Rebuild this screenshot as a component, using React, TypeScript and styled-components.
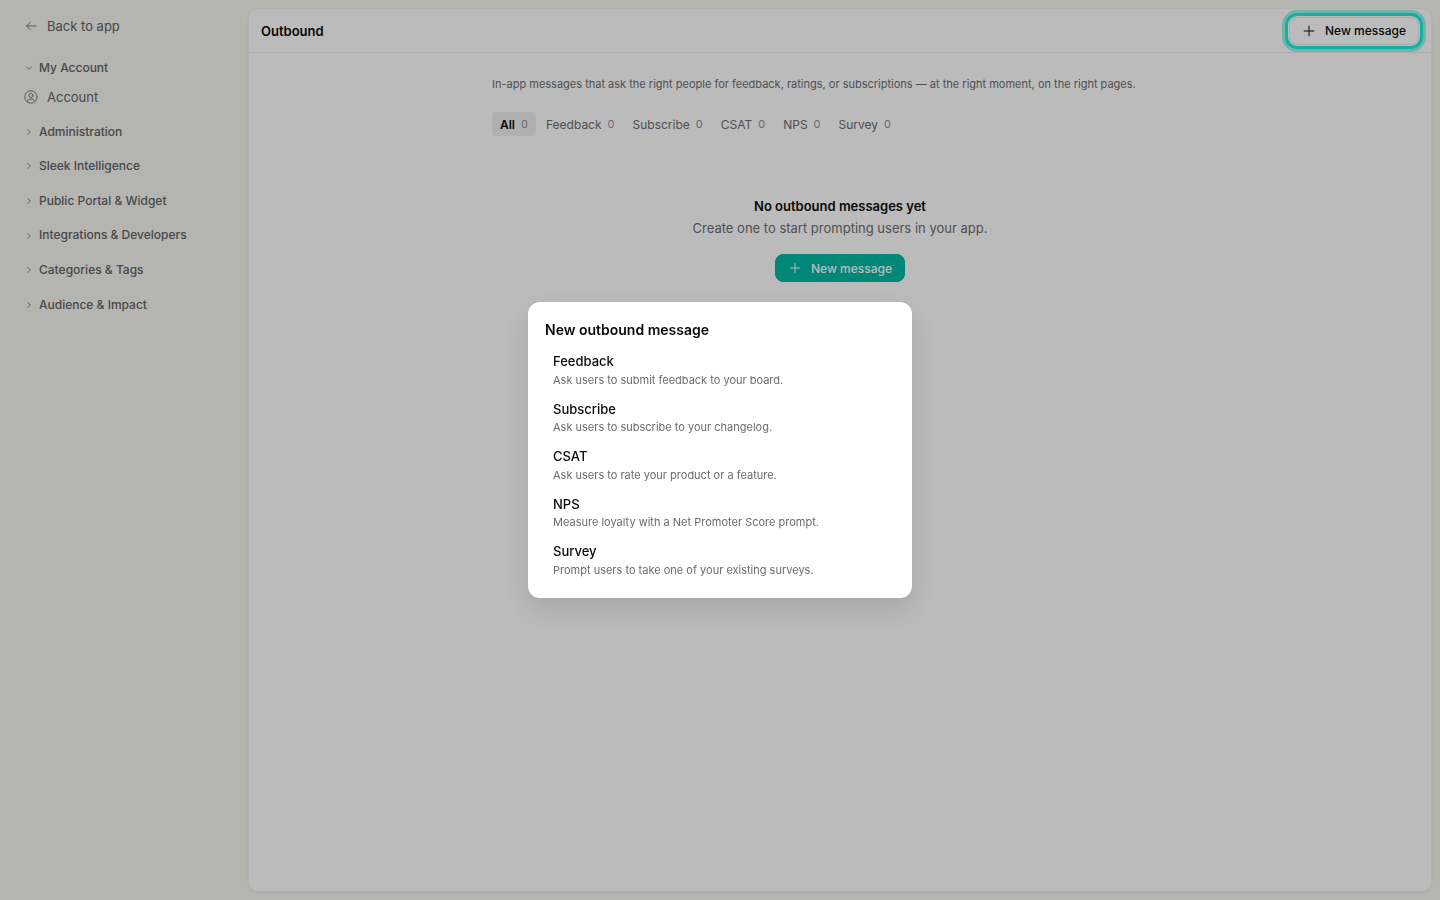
import React from "react";
import styled, { createGlobalStyle } from "styled-components";

const GlobalStyle = createGlobalStyle`
  *, *::before, *::after { box-sizing: border-box; }
  body {
    margin: 0;
    background: #f0f0eb;
    color: #0a0a0a;
    font-family: Inter, "Liberation Sans", sans-serif;
    font-size: 13px;
    line-height: 20px;
  }
  h1, h2, p { margin: 0; padding: 0; }
  button { font-family: inherit; cursor: pointer; }
`;

const Shell = styled.div`
  display: flex;
  min-height: 100vh;
`;

const Sidebar = styled.nav`
  flex: 0 0 248px;
  padding: 16px 24px;
  color: #5f6063;

  svg { opacity: 0.8; }
`;

const SideLink = styled.a`
  display: flex;
  align-items: center;
  gap: 9px;
  height: 20px;
  color: inherit;
  font-size: 13px;
  text-decoration: none;
`;

const BackLink = styled(SideLink)`
  margin-bottom: 23px;
`;

const AccountLink = styled(SideLink)`
  margin-bottom: 8px;
`;

const SectionToggle = styled.button`
  display: flex;
  align-items: center;
  gap: 6px;
  width: 100%;
  padding: 8px 0;
  border: 0;
  background: none;
  color: inherit;
  font-size: 12px;
  font-weight: 500;
  line-height: 1.55;
  text-align: left;

  svg { margin-left: 1px; }
`;

const FirstToggle = styled(SectionToggle)`
  padding: 0;
  margin-bottom: 9px;
`;

const Panel = styled.main`
  flex: 1;
  margin: 8px 8px 8px 0;
  border: 1px solid #ededeb;
  border-radius: 10px;
  background: #fafafa;
  box-shadow: 0 1px 2px rgba(0, 0, 0, 0.06);
`;

const Header = styled.header`
  display: flex;
  align-items: center;
  justify-content: space-between;
  height: 44px;
  padding: 0 12px;
  border-bottom: 1px solid #e6e6e6;
`;

const PageTitle = styled.h1`
  font-size: 13px;
  font-weight: 600;
`;

const ActionButton = styled.button<{ $primary?: boolean }>`
  display: inline-flex;
  align-items: center;
  gap: 9px;
  height: 28px;
  padding: 0 12px;
  border: 1px solid ${(p) => (p.$primary ? "#00b5a0" : "#e4e4e7")};
  border-radius: 8px;
  background: ${(p) => (p.$primary ? "#00b5a0" : "#fafafa")};
  color: ${(p) => (p.$primary ? "#fafafa" : "#0a0a0a")};
  font-size: 12px;
  font-weight: 500;
`;

const FocusedButton = styled(ActionButton)`
  outline: none;
  box-shadow: 0 0 0 1px #fafafa, 0 0 0 4px #15eed8, 0 0 0 7px rgba(20, 220, 200, 0.4);
`;

const Content = styled.div`
  max-width: 744px;
  margin: 0 auto;
  padding: 21px 24px;
`;

const Intro = styled.p`
  color: #6b6b70;
  font-size: 11px;
`;

const Tabs = styled.div`
  display: flex;
  gap: 2px;
  margin-top: 18px;
`;

const Tab = styled.button<{ $active?: boolean }>`
  display: flex;
  align-items: center;
  gap: 6px;
  height: 24px;
  padding: 0 8px;
  border: 0;
  border-radius: 4px;
  background: ${(p) => (p.$active ? "#ebebeb" : "none")};
  color: ${(p) => (p.$active ? "#0a0a0a" : "#6b6b70")};
  font-size: 12px;
  font-weight: ${(p) => (p.$active ? 600 : 400)};
`;

const Count = styled.span`
  color: #8e8e93;
  font-size: 11px;
  font-weight: 400;
`;

const Empty = styled.section`
  display: flex;
  flex-direction: column;
  align-items: center;
  padding-top: 60px;
`;

const EmptyTitle = styled.h2`
  font-size: 13px;
  font-weight: 600;
`;

const EmptyText = styled.p`
  margin: 2px 0 16px;
  color: #6b6b70;
  font-size: 13px;
`;

const Overlay = styled.div`
  position: fixed;
  inset: 0;
  display: flex;
  align-items: center;
  justify-content: center;
  background: rgba(0, 0, 0, 0.25);
`;

const Dialog = styled.div`
  width: 384px;
  padding: 18px 17px 14px;
  border-radius: 12px;
  background: #fff;
  box-shadow: 0 12px 32px rgba(0, 0, 0, 0.12);
`;

const DialogTitle = styled.h2`
  margin-bottom: 6px;
  font-size: 14px;
  font-weight: 600;
`;

const Option = styled.button`
  display: block;
  width: 100%;
  padding: 7px 8px 5px;
  border: 0;
  border-radius: 6px;
  background: none;
  color: #0a0a0a;
  text-align: left;
`;

const OptionName = styled.span`
  display: block;
  font-size: 13px;
  font-weight: 500;
  line-height: 1.35;
`;

const OptionText = styled.span`
  display: block;
  color: #6b6b70;
  font-size: 11px;
  line-height: 18px;
`;

const Stroke = ({ size, children }: { size: number; children: React.ReactNode }) => (
  <svg width={size} height={size} viewBox={`0 0 ${size} ${size}`} fill="none" stroke="currentColor" strokeWidth={1} strokeLinecap="round" strokeLinejoin="round" aria-hidden="true">
    {children}
  </svg>
);

const ArrowLeft = () => <Stroke size={14}><path d="M12 7H2.500M6.500 3 2.500 7l4 4" /></Stroke>;
const ChevronDown = () => <Stroke size={8}><path d="m1.500 2.800 2.500 2.500 2.500-2.500" /></Stroke>;
const ChevronRight = () => <Stroke size={8}><path d="M2.800 1.500 5.300 4 2.800 6.500" /></Stroke>;
const Plus = () => <Stroke size={14}><path d="M7 2.200v9.600M2.200 7h9.600" /></Stroke>;
const UserCircle = () => (
  <Stroke size={14}>
    <circle cx="7" cy="7" r="6.200" />
    <circle cx="7" cy="5.600" r="2" />
    <path d="M3.500 11.600c.3-1.800 1.300-2.500 2.300-2.500h2.400c1 0 2 .7 2.300 2.500" />
  </Stroke>
);

const sections = ["Administration", "Sleek Intelligence", "Public Portal & Widget", "Integrations & Developers", "Categories & Tags", "Audience & Impact"];
const tabs = ["All", "Feedback", "Subscribe", "CSAT", "NPS", "Survey"];
const options = [
  ["Feedback", "Ask users to submit feedback to your board."],
  ["Subscribe", "Ask users to subscribe to your changelog."],
  ["CSAT", "Ask users to rate your product or a feature."],
  ["NPS", "Measure loyalty with a Net Promoter Score prompt."],
  ["Survey", "Prompt users to take one of your existing surveys."],
];

export default function App() {
  return (
    <>
      <GlobalStyle />
      <Shell>
        <Sidebar aria-label="Settings">
          <BackLink href="#"><ArrowLeft />Back to app</BackLink>
          <FirstToggle aria-expanded="true"><ChevronDown />My Account</FirstToggle>
          <AccountLink href="#account"><UserCircle />Account</AccountLink>
          {sections.map((name) => (
            <SectionToggle key={name} aria-expanded="false"><ChevronRight />{name}</SectionToggle>
          ))}
        </Sidebar>
        <Panel>
          <Header>
            <PageTitle>Outbound</PageTitle>
            <FocusedButton><Plus />New message</FocusedButton>
          </Header>
          <Content>
            <Intro>In-app messages that ask the right people for feedback, ratings, or subscriptions — at the right moment, on the right pages.</Intro>
            <Tabs role="tablist">
              {tabs.map((name, i) => (
                <Tab key={name} role="tab" aria-selected={i === 0} $active={i === 0}>{name}<Count>0</Count></Tab>
              ))}
            </Tabs>
            <Empty>
              <EmptyTitle>No outbound messages yet</EmptyTitle>
              <EmptyText>Create one to start prompting users in your app.</EmptyText>
              <ActionButton $primary><Plus />New message</ActionButton>
            </Empty>
          </Content>
        </Panel>
      </Shell>
      <Overlay>
        <Dialog role="dialog" aria-modal="true" aria-labelledby="dialog-title">
          <DialogTitle id="dialog-title">New outbound message</DialogTitle>
          {options.map(([name, text]) => (
            <Option key={name}><OptionName>{name}</OptionName><OptionText>{text}</OptionText></Option>
          ))}
        </Dialog>
      </Overlay>
    </>
  );
}
